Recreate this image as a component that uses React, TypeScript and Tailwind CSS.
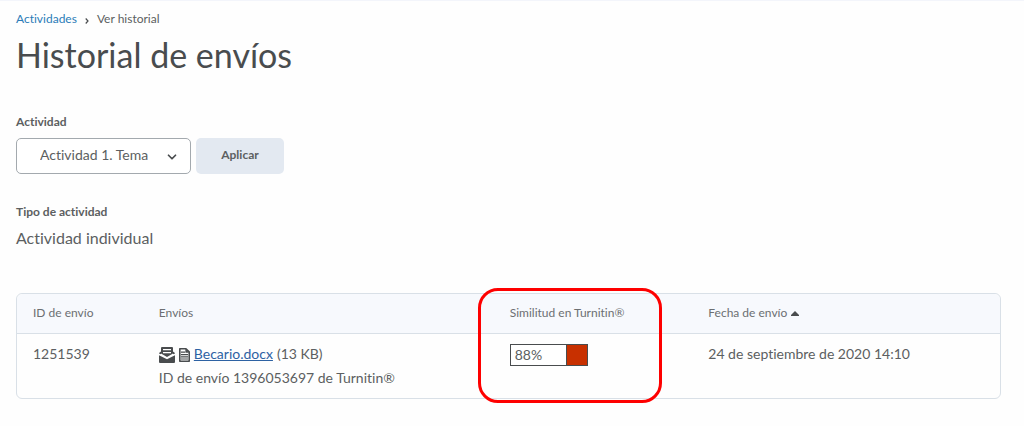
import { ChevronDown } from "lucide-react";

interface Submission {
  id: string;
  file: string;
  size: string;
  turnitinId: string;
  similarity: number;
  date: string;
}

const submissions: Submission[] = [
  {
    id: "1251539",
    file: "Becario.docx",
    size: "13 KB",
    turnitinId: "1396053697",
    similarity: 88,
    date: "24 de septiembre de 2020 14:10",
  },
];

function InboxIcon() {
  return (
    <svg viewBox="0 0 16 16" className="mt-0.5 h-4 w-4 shrink-0" aria-hidden="true">
      <path fill="#494c4e" d="M3 0h10q1 0 1 1v5.5l-6 3.4-6-3.4V1q0-1 1-1z" />
      <path fill="#494c4e" d="M0 6l2-1.5v2.8L0 6.5zM16 6l-2-1.5v2.8l2-0.8z" />
      <path fill="#494c4e" d="M0 8.3l8 4 8-4V15q0 1-1 1H1q-1 0-1-1z" />
      <path stroke="#fff" strokeWidth="1.3" d="M4 2.6h8M4 5.6h8" />
    </svg>
  );
}

function DocumentIcon() {
  return (
    <svg viewBox="0 0 11 14" className="mt-0.5 h-3.5 w-[11px] shrink-0" aria-hidden="true">
      <path fill="#fff" stroke="#494c4e" strokeWidth="1.6" strokeLinejoin="round" d="M0.8 0.8h6.2l3.2 3v9.4H0.8z" />
      <path fill="#494c4e" d="M6.4 0.8l3.8 4H6.4z" />
      <path stroke="#494c4e" strokeWidth="1.2" d="M2 4.2h4M2 6.6h7M2 8.8h7M2 11h7" />
    </svg>
  );
}

export default function App() {
  return (
    <main className="min-h-screen border-t border-[#f3f5fb] bg-[#fefefe] px-4 pt-2 font-['Lato',sans-serif] text-[#5c5f61] [font-variant-ligatures:none]">
      <nav aria-label="Ruta" className="flex items-center gap-2 text-xs leading-5">
        <a href="#actividades" className="text-[#2b7cb8]">
          Actividades
        </a>
        <svg viewBox="0 0 4 6" className="mt-1 h-1.5 w-1" aria-hidden="true">
          <path d="M0.7 0.5L3 3 0.7 5.5" fill="none" stroke="#494c4e" strokeWidth="1.2" />
        </svg>
        <span>Ver historial</span>
      </nav>
      <h1 className="mt-1 text-[34px] leading-11 text-[#494c4e]">Historial de envíos</h1>

      <form className="mt-[35px]" onSubmit={(e) => e.preventDefault()}>
        <label htmlFor="activity" className="block text-xs leading-5 font-bold">
          Actividad
        </label>
        <div className="mt-1.5 flex gap-[5px]">
          <div className="relative">
            <select
              id="activity"
              className="h-9 w-[175px] appearance-none rounded-[5px] border border-[#a3a9ae] bg-white pb-0.5 pl-[23px] text-sm"
            >
              <option>Actividad 1. Tema</option>
            </select>
            <ChevronDown
              className="pointer-events-none absolute top-3 right-3 h-3.5 w-3.5 text-[#494c4e]"
              strokeWidth={3}
            />
          </div>
          <button type="submit" className="h-9 w-22 rounded-[5px] bg-[#e3e9f1] pb-0.5 text-xs font-bold">
            Aplicar
          </button>
        </div>
      </form>

      <section className="mt-7">
        <h2 className="text-xs leading-5 font-bold">Tipo de actividad</h2>
        <p className="mt-1 text-base">Actividad individual</p>
      </section>

      <div className="mt-[43px] mr-[7px] rounded-md border border-[#d9e0e7]">
        <table className="w-full table-fixed border-separate border-spacing-0 text-left">
          <colgroup>
            <col className="w-[12.8%]" />
            <col className="w-[35.7%]" />
            <col className="w-[20.2%]" />
            <col />
          </colgroup>
          <thead>
            <tr className="h-10 bg-[#f7f9fd] text-xs text-[#6c6f72] *:border-b *:border-[#d9e0e7] *:px-4 *:pb-0.5 *:font-normal">
              <th className="rounded-tl-md">ID de envío</th>
              <th>Envíos</th>
              <th className="relative">
                Similitud en Turnitin®
                <span className="pointer-events-none absolute -top-1.5 -left-4 h-[115px] w-[184px] rounded-[20px] border-3 border-[#fe0000]" />
              </th>
              <th className="rounded-tr-md">
                Fecha de envío
                <svg viewBox="0 0 8 5" className="ml-1 inline h-[5px] w-2" aria-hidden="true">
                  <path fill="#494c4e" d="M4 0L8 4V5H0V4z" />
                </svg>
              </th>
            </tr>
          </thead>
          <tbody className="text-sm leading-6">
            {submissions.map((s) => (
              <tr key={s.id} className="align-top *:px-4 *:py-2">
                <td>{s.id}</td>
                <td>
                  <div className="flex items-center gap-1">
                    <InboxIcon />
                    <DocumentIcon />
                    <a href="#becario" className="text-[#2d62a3] underline">
                      {s.file}
                    </a>
                    ({s.size})
                  </div>
                  <div>ID de envío {s.turnitinId} de Turnitin®</div>
                </td>
                <td>
                  <div className="mt-0.5 flex h-[22px] w-[78px] border border-[#494c4e] bg-white">
                    <span className="flex-1 pl-1 leading-5">{s.similarity}%</span>
                    <span className="w-[21px] border-l border-[#494c4e] bg-[#c83000]" />
                  </div>
                </td>
                <td>{s.date}</td>
              </tr>
            ))}
          </tbody>
        </table>
      </div>
    </main>
  );
}
